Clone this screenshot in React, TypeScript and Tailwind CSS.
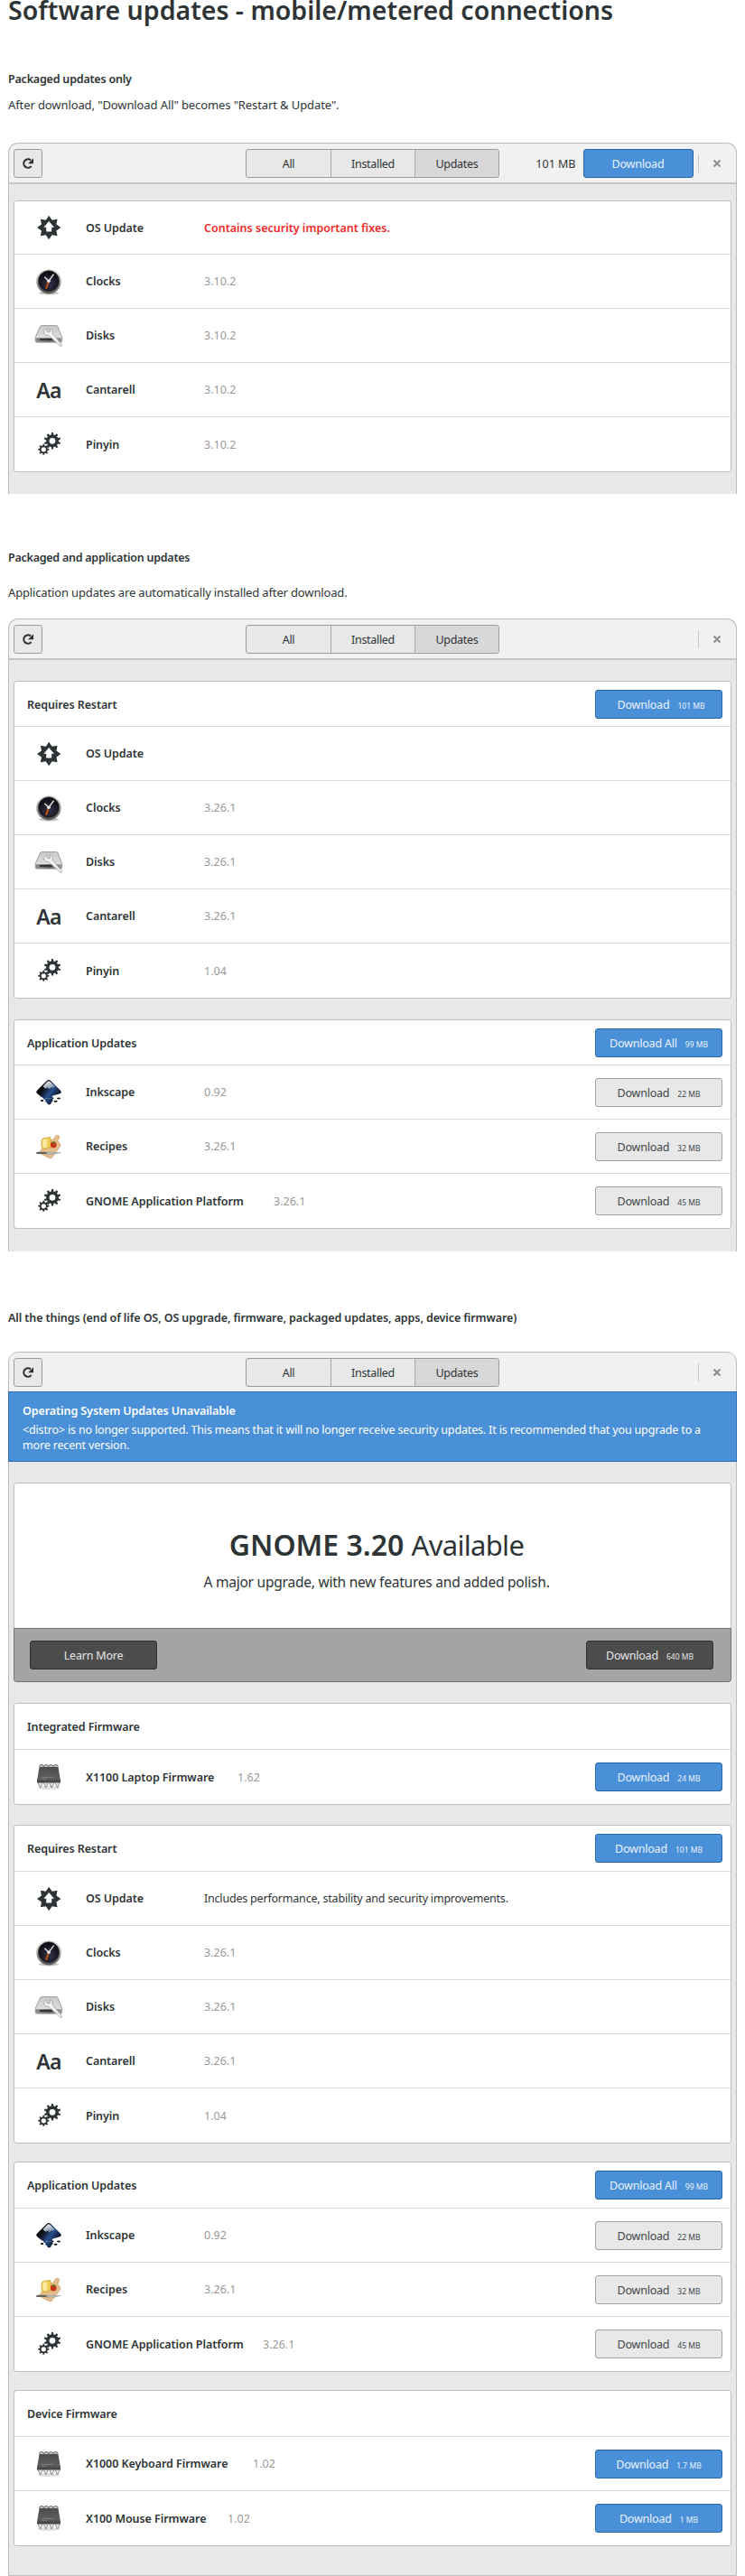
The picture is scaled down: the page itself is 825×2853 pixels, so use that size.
import type { ReactNode } from "react";

function gearPath(cx: number, cy: number, outer: number, inner: number, teeth: number, hole: number) {
  const pts: string[] = [];
  const step = (Math.PI * 2) / teeth;
  const at = (r: number, a: number) => `${(cx + r * Math.sin(a)).toFixed(2)} ${(cy - r * Math.cos(a)).toFixed(2)}`;
  for (let i = 0; i < teeth; i++) {
    const a = i * step;
    pts.push(at(inner, a - step * 0.3), at(outer, a - step * 0.17), at(outer, a + step * 0.17), at(inner, a + step * 0.3));
  }
  return `M${pts.join("L")}ZM${cx - hole} ${cy}a${hole} ${hole} 0 1 0 ${hole * 2} 0a${hole} ${hole} 0 1 0 ${-hole * 2} 0Z`;
}

function starPath(cx: number, cy: number, outer: number, inner: number, points: number) {
  const pts: string[] = [];
  for (let i = 0; i < points * 2; i++) {
    const r = i % 2 ? inner : outer;
    const a = (i * Math.PI) / points;
    pts.push(`${(cx + r * Math.sin(a)).toFixed(2)} ${(cy - r * Math.cos(a)).toFixed(2)}`);
  }
  return `M${pts.join("L")}Z`;
}

function OsIcon() {
  return (
    <svg width="28" height="28" viewBox="0 0 28 28">
      <path d={starPath(14.2, 14, 13.2, 8.9, 8)} fill="#2e3436" />
      <path d="M14.2 7L20 13.8H17.2V18.6H11.2V13.8H8.4Z" fill="#fff" />
    </svg>
  );
}

function ClockIcon() {
  return (
    <svg width="30" height="30" viewBox="0 0 30 30">
      <defs>
        <linearGradient id="rim" x1="0" y1="0" x2="0" y2="1">
          <stop offset="0" stopColor="#e9eae7" />
          <stop offset="0.5" stopColor="#aaaca8" />
          <stop offset="1" stopColor="#55574f" />
        </linearGradient>
        <radialGradient id="face" cx="0.5" cy="0.65" r="0.6">
          <stop offset="0" stopColor="#34344a" />
          <stop offset="1" stopColor="#0b0b12" />
        </radialGradient>
      </defs>
      <ellipse cx="15" cy="27.6" rx="11" ry="1.8" fill="#000" opacity="0.25" />
      <circle cx="15" cy="14.6" r="13.8" fill="url(#rim)" />
      <circle cx="15" cy="14.3" r="11.6" fill="url(#face)" stroke="#3a3b3a" strokeWidth="0.7" />
      <path d="M15 14.3L12 22.8" stroke="#d3560f" strokeWidth="1.8" />
      <path d="M15 14.3L20.6 6.6M15 14.3L10.3 9.8" stroke="#d8d9d6" strokeWidth="1.5" />
      <circle cx="15" cy="14.3" r="1.8" fill="#eeeeec" />
    </svg>
  );
}

function DiskIcon() {
  return (
    <svg width="32" height="26" viewBox="0 0 32 26">
      <defs>
        <linearGradient id="plate" x1="0" y1="0" x2="0" y2="1">
          <stop offset="0" stopColor="#c9cac8" />
          <stop offset="1" stopColor="#e6e6e5" />
        </linearGradient>
        <linearGradient id="front" x1="0" y1="0" x2="1" y2="0">
          <stop offset="0" stopColor="#8b8d89" />
          <stop offset="0.5" stopColor="#5d5f5c" />
          <stop offset="1" stopColor="#9a9c98" />
        </linearGradient>
      </defs>
      <path d="M6.5 2.6Q7 1.6 8 1.6H24.5Q25.6 1.6 26 2.6L30.6 14.5V19Q30.6 20.2 29.2 20.2H2.8Q1.2 20.2 1.2 19V14.5Z" fill="url(#plate)" stroke="#8a8c88" strokeWidth="0.8" />
      <path d="M1.6 15.2H30.3V19Q30.3 19.8 29.2 19.8H2.8Q1.6 19.8 1.6 19Z" fill="url(#front)" />
      <path d="M6 16H20V17.8H6Z" fill="#2e3030" />
      <path d="M14.2 4.8C12.2 5.2 10.4 6.8 10.8 9.2C11.2 11.6 13.2 12.7 15.6 12.3L29 24.4Q30.6 24.6 30.6 23L20.2 10.4C20.8 7.6 19.2 5.2 17 4.8L17.4 8.4L15 9.2L13.6 7.4Z" fill="#f3f3f2" stroke="#8f918d" strokeWidth="0.7" />
    </svg>
  );
}

function FontIcon() {
  return <span className="pt-px text-[23px] font-semibold leading-[28px] tracking-[-0.8px]">Aa</span>;
}

function GearsIcon() {
  return (
    <svg width="28" height="28" viewBox="0 0 28 28" fill="#2e3436" fillRule="evenodd">
      <path d={gearPath(18, 10.3, 9.3, 6.9, 10, 3.4)} />
      <path d={gearPath(8.3, 19.8, 6.1, 4.5, 8, 2.6)} />
    </svg>
  );
}

function InkscapeIcon() {
  return (
    <svg width="30" height="30" viewBox="0 0 30 30">
      <defs>
        <linearGradient id="ink" x1="0" y1="0" x2="1" y2="0.7">
          <stop offset="0.35" stopColor="#0a0c10" />
          <stop offset="0.62" stopColor="#27508f" />
          <stop offset="0.9" stopColor="#0a1122" />
        </linearGradient>
        <linearGradient id="snow" x1="0" y1="0" x2="0.5" y2="1">
          <stop offset="0" stopColor="#fff" />
          <stop offset="1" stopColor="#7d8ca4" />
        </linearGradient>
      </defs>
      <path d="M12.6 2.2Q15 -0.2 17.4 2.2L28 12.8Q29.8 15 27.4 16.2L19.6 18.4Q17.6 19.4 19.8 20.6Q21.6 21.8 19 22.6Q20.6 24.6 18 25.4Q17.6 28.4 15.2 28.4Q13.2 28.2 12.8 26Q9.4 25 11.8 23.4Q9 22.6 8.8 21Q6 19.6 5 18.4L2.6 16.4Q0.2 15 2 12.8Z" fill="url(#ink)" />
      <path d="M13.4 2.9Q15 1.4 16.6 2.9L21.6 8L19.4 10L17.6 9L16 11.4L13.8 9.4L11.6 10.8L8.4 8.2Z" fill="url(#snow)" />
      <ellipse cx="7.6" cy="24" rx="1.8" ry="1" fill="#111" />
      <ellipse cx="22.6" cy="24.8" rx="2" ry="1" fill="#111" />
      <ellipse cx="26" cy="21.6" rx="2" ry="1" fill="#222" />
      <path d="M11 21.4Q15 22.4 18.6 21.2" stroke="#8a8f96" strokeWidth="0.6" fill="none" />
    </svg>
  );
}

function RecipesIcon() {
  return (
    <svg width="30" height="28" viewBox="0 0 30 28">
      <path d="M22.6 2Q24.6 0.4 26.2 2Q27.2 3.4 26 5.2L24.6 8Q27.4 9.6 28 13L18.4 26.2Q17 27.4 15.4 26.4L5.6 21.6Q4.4 20.6 5.4 19L14 8.4Q16 6.4 19.4 6.4Z" fill="#e3bd8c" stroke="#c99a62" strokeWidth="0.7" />
      <path d="M7 7.2Q7.4 4.6 10.6 4.2L17 3.6L17.6 14L11 16.8Q7 16.4 7 13Z" fill="#f1cf57" stroke="#c8952a" strokeWidth="0.7" />
      <path d="M8 7.4Q9 5.4 11.4 5.2L13.4 7L12.6 15.4Q8.4 15.8 8 13Z" fill="#fbe9a0" />
      <circle cx="20.2" cy="12" r="3.4" fill="#c8321a" />
      <path d="M18.4 9.6L20.4 11L22.8 9.4L20.6 8Z" fill="#5a7d22" />
      <path d="M1 21.2Q1.4 19.6 4 19.8L13 20V22H2.4Q0.8 22.2 1 21.2Z" fill="#63615d" />
      <path d="M12.6 19.9L28.4 20.6Q22 22.8 12.6 22.4Z" fill="#b9bbb8" stroke="#8b8d8a" strokeWidth="0.4" />
    </svg>
  );
}

function ChipIcon() {
  return (
    <svg width="30" height="30" viewBox="0 0 30 30">
      <defs>
        <linearGradient id="chip" x1="0" y1="0" x2="0" y2="1">
          <stop offset="0" stopColor="#4c4c4c" />
          <stop offset="0.7" stopColor="#5e5e5e" />
          <stop offset="1" stopColor="#3c3c3c" />
        </linearGradient>
      </defs>
      <ellipse cx="15" cy="27" rx="12.4" ry="2" fill="#000" opacity="0.12" />
      <path d="M4.6 3.6a2.4 2 0 0 1 4.8 0M9.8 3.6a2.4 2 0 0 1 4.8 0M15 3.6a2.4 2 0 0 1 4.8 0M20.4 3.6a2.4 2 0 0 1 4.8 0" fill="#ddd" stroke="#555" strokeWidth="1" />
      <path d="M4.6 3.8H25.4L28 18.8V20.4Q28 21.6 27 21.6H3Q2 21.6 2 20.4V18.8Z" fill="url(#chip)" />
      <path d="M3 21.4L5.6 27L8.2 21.4ZM9.2 21.4L11.8 27L14.4 21.4ZM15.6 21.4L18.2 27L20.8 21.4ZM22 21.4L24.6 27L27.2 21.4Z" fill="#e4e4e4" stroke="#777" strokeWidth="0.8" />
      <path d="M7 15.4H19.6M6.8 17.6H12.6" stroke="#8c8c8c" strokeWidth="0.7" />
    </svg>
  );
}

function Tabs() {
  return (
    <div className="ml-[225px] flex h-8 w-[281px] overflow-hidden rounded-[3px] border border-[#9c9c9c] bg-[#e8e8e8] text-center leading-[31px] tracking-[-0.3px]">
      <span className="w-[93px]">All</span>
      <span className="w-[94px] border-x border-[#a9a9a9]">Installed</span>
      <span className="flex-1 bg-[#d8d8d8]">Updates</span>
    </div>
  );
}

function HeaderBar({ metered = false, line = true }: { metered?: boolean; line?: boolean }) {
  return (
    <div className={line ? "flex h-[45px] items-start border-b-2 border-[#c6c6c6] pl-[5px] pt-[6px]" : "flex h-[43px] items-start pl-[5px] pt-[6px]"}>
      <div className="flex h-8 w-8 items-center justify-center rounded-[3px] border border-[#9c9c9c] bg-[#e8e8e8]">
        <svg width="16" height="16" viewBox="0 0 16 16" fill="none">
          <path d="M11.6 11.1A4.7 4.7 0 1 1 11 4.4" stroke="#2e3436" strokeWidth="2.1" />
          <path d="M14 2.2V8.2H8Z" fill="#2e3436" />
        </svg>
      </div>
      <Tabs />
      <div className="ml-auto flex h-8 items-center pr-4">
        {metered && (
          <>
            <span className="mr-2 pt-px leading-5">101 MB</span>
            <span className="mr-[5px] flex h-8 w-[122px] items-center justify-center rounded-[3px] border border-[#2a66a5] bg-[#4a90d9] pt-px leading-5 tracking-[-0.2px] text-[#e9f2fb]">
              Download
            </span>
          </>
        )}
        <span className="mr-[15px] h-5 w-[1.5px] bg-[#c9c9c9]" />
        <svg width="10" height="10" viewBox="0 0 10 10">
          <path d="M1.5 1.5L8.5 8.5M8.5 1.5L1.5 8.5" stroke="#8f918f" strokeWidth="2.2" />
        </svg>
      </div>
    </div>
  );
}

function Window({ className, children }: { className: string; children: ReactNode }) {
  return (
    <div className={`ml-[9px] w-[807px] rounded-t-[11px] border border-[#bcbcbc] bg-[#f1f1f1] ${className}`}>
      {children}
    </div>
  );
}

type Tone = "blue" | "gray" | "dark";
const tones: Record<Tone, string> = {
  blue: "border-[#2a66a5] bg-[#4a90d9] text-[#e9f2fb]",
  gray: "border-[#a2a2a2] bg-[#e8e8e8] text-[#41474a]",
  dark: "border-[#303030] bg-[#4c4c4c] text-[#e6e6e6]",
};

function Button({ label = "Download", size, tone, shift = "" }: { label?: string; size?: string; tone: Tone; shift?: string }) {
  return (
    <span className={`flex h-8 w-[141px] shrink-0 items-baseline justify-center gap-[9px] rounded-[3px] border pt-[6px] leading-5 tracking-[-0.2px] ${tones[tone]} ${shift}`}>
      {label}
      {size && <small className="text-[8.5px] leading-5 tracking-normal">{size}</small>}
    </span>
  );
}

function Card({ title, tall = false, action, className, children }: { title?: string; tall?: boolean; action?: ReactNode; className?: string; children: ReactNode }) {
  return (
    <div className={`mx-[5px] divide-y divide-[#dadad6] rounded-[3px] border border-[#bfbfbf] bg-white ${className ?? ""}`}>
      {title && (
        <div className={`flex items-center justify-between pl-[14px] pr-[9px] ${tall ? "h-[51px]" : "h-[50px]"}`}>
          <span className="pt-[2px] font-semibold leading-5 tracking-[-0.1px]">{title}</span>
          {action}
        </div>
      )}
      {children}
    </div>
  );
}

function Row({ icon, name, version, width = "w-[131px]", note, action }: { icon: ReactNode; name: string; version?: string; width?: string; note?: ReactNode; action?: ReactNode }) {
  return (
    <div className="flex h-[60px] items-center pr-[9px] first:h-[59px]">
      <div className="flex w-[79px] shrink-0 justify-center pr-[3px]">{icon}</div>
      <span className={`${width} shrink-0 whitespace-nowrap pt-px font-semibold leading-5 tracking-[-0.06px]`}>{name}</span>
      {version && <span className="pt-px leading-5 text-[#999]">{version}</span>}
      {note}
      <div className="ml-auto">{action}</div>
    </div>
  );
}

function PackageRows({ versions }: { versions: [string, string, string, string] }) {
  return (
    <>
      <Row icon={<ClockIcon />} name="Clocks" version={versions[0]} />
      <Row icon={<DiskIcon />} name="Disks" version={versions[1]} />
      <Row icon={<FontIcon />} name="Cantarell" version={versions[2]} />
      <Row icon={<GearsIcon />} name="Pinyin" version={versions[3]} />
    </>
  );
}

function AppUpdates({ tall, platformWidth, className }: { tall?: boolean; platformWidth: string; className: string }) {
  return (
    <Card title="Application Updates" tall={tall} className={className} action={<Button tone="blue" label="Download All" size="99 MB" />}>
      <Row icon={<InkscapeIcon />} name="Inkscape" version="0.92" action={<Button tone="gray" size="22 MB" />} />
      <Row icon={<RecipesIcon />} name="Recipes" version="3.26.1" action={<Button tone="gray" size="32 MB" />} />
      <Row icon={<GearsIcon />} name="GNOME Application Platform" width={platformWidth} version="3.26.1" action={<Button tone="gray" size="45 MB" />} />
    </Card>
  );
}

export default function App() {
  return (
    <main className="h-[2853px] w-[825px] overflow-hidden bg-white font-['Noto_Sans',sans-serif] text-[12.5px] text-[#2e3436]">
      <h1 className="pl-[9px] text-[28.5px] font-semibold leading-[22px]">Software updates - mobile/metered connections</h1>

      <section className="pt-14">
        <h2 className="pl-[9px] font-semibold leading-5 tracking-[-0.2px]">Packaged updates only</h2>
        <p className="mt-2 pl-[9px] text-[13px] leading-5 tracking-[-0.1px]">After download, "Download All" becomes "Restart &amp; Update".</p>
        <Window className="mt-8 border-b-0">
          <HeaderBar metered />
          <div className="bg-[#e8e8e8] pb-6 pt-[18px]">
            <Card>
              <Row icon={<OsIcon />} name="OS Update" note={<span className="pt-px font-semibold leading-5 text-[#ef2929]">Contains security important fixes.</span>} />
              <PackageRows versions={["3.10.2", "3.10.2", "3.10.2", "3.10.2"]} />
            </Card>
          </div>
        </Window>
      </section>

      <section className="pt-[61px]">
        <h2 className="pl-[9px] font-semibold leading-5 tracking-[-0.25px]">Packaged and application updates</h2>
        <p className="mt-[18px] pl-[9px] text-[13px] leading-5 tracking-[-0.15px]">Application updates are automatically installed after download.</p>
        <Window className="mt-[19px] border-b-0">
          <HeaderBar />
          <div className="bg-[#e8e8e8] pb-[25px] pt-[23px]">
            <Card title="Requires Restart" action={<Button tone="blue" size="101 MB" shift="pl-[5px]" />}>
              <Row icon={<OsIcon />} name="OS Update" />
              <PackageRows versions={["3.26.1", "3.26.1", "3.26.1", "1.04"]} />
            </Card>
            <AppUpdates platformWidth="w-[208px]" className="mt-[23px]" />
          </div>
        </Window>
      </section>

      <section className="pt-16">
        <h2 className="pl-[9px] font-semibold leading-5 tracking-[-0.1px]">
          All the things (end of life OS, OS upgrade, firmware, packaged updates, apps, device firmware)
        </h2>
        <Window className="mt-[27px]">
          <HeaderBar line={false} />
          <div className="-mx-px h-[78px] border border-[#2f6fb0] bg-[#4a90d9] pl-[15px] pt-[11px] text-white">
            <p className="font-semibold leading-5 tracking-[-0.08px]">Operating System Updates Unavailable</p>
            <p className="mt-[2px] w-[770px] leading-[17px] tracking-[-0.16px]">
              {"<distro> is no longer supported. This means that it will no longer receive security updates. It is recommended that you upgrade to a more recent version."}
            </p>
          </div>
          <div className="bg-[#e8e8e8] pb-8 pt-[23px]">
            <div className="mx-[5px] overflow-hidden rounded-[3px] bg-white">
              <div className="h-[161px] rounded-t-[3px] border border-b-0 border-[#bfbfbf] pl-[9px] pt-[45px] text-center">
                <h3 className="text-[32px] leading-[46px]">
                  <b className="font-semibold">GNOME 3.20</b> <span className="text-[31px] tracking-[-0.7px]">Available</span>
                </h3>
                <p className="mt-[8px] text-[15.5px] leading-5 tracking-[-0.22px]">A major upgrade, with new features and added polish.</p>
              </div>
              <div className="flex h-[60px] items-center justify-between rounded-b-[3px] border border-[#737373] bg-[#a4a4a4] pl-[17px] pr-[19px]">
                <Button tone="dark" label="Learn More" />
                <Button tone="dark" size="640 MB" />
              </div>
            </div>
            <Card title="Integrated Firmware" tall className="mt-[23px]">
              <Row icon={<ChipIcon />} name="X1100 Laptop Firmware" width="w-[168px]" version="1.62" action={<Button tone="blue" size="24 MB" />} />
            </Card>
            <Card title="Requires Restart" tall className="mt-[22px]" action={<Button tone="blue" size="101 MB" />}>
              <Row icon={<OsIcon />} name="OS Update" note={<span className="pt-px leading-5 tracking-[-0.2px]">Includes performance, stability and security improvements.</span>} />
              <PackageRows versions={["3.26.1", "3.26.1", "3.26.1", "1.04"]} />
            </Card>
            <AppUpdates tall platformWidth="w-[196px]" className="mt-5" />
            <Card title="Device Firmware" tall className="mt-5">
              <Row icon={<ChipIcon />} name="X1000 Keyboard Firmware" width="w-[185px]" version="1.02" action={<Button tone="blue" size="1.7 MB" />} />
              <Row icon={<ChipIcon />} name="X100 Mouse Firmware" width="w-[157px]" version="1.02" action={<Button tone="blue" size="1 MB" />} />
            </Card>
          </div>
        </Window>
      </section>
    </main>
  );
}
